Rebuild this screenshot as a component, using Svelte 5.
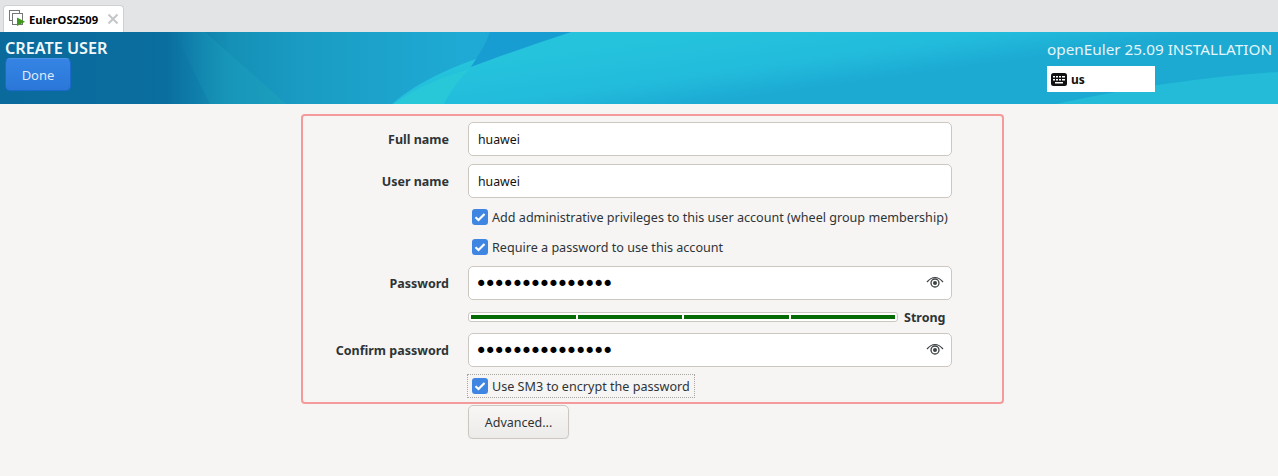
<script>
  const password = '•'.repeat(15);
  const levels = [0, 1, 2, 3];
</script>

{#snippet tick()}
  <span class="box"><svg width="16" height="16" viewBox="0 0 16 16"><path d="M3.500 8.200l3 2.800 6-6" /></svg></span>
{/snippet}

{#snippet eye()}
  <svg class="eye" width="18" height="14" viewBox="0 0 18 14">
    <path d="M1 6c2.500-3 5-4.500 8-4.500s5.500 1.500 8 4.500" fill="none" stroke="#3d4143" stroke-width="1.200" />
    <circle cx="9" cy="7" r="4" fill="none" stroke="#3d4143" stroke-width="1.300" />
    <circle cx="9" cy="7" r="2" fill="#3d4143" />
  </svg>
{/snippet}

<div class="tabbar">
  <div class="tab">
    <svg class="vm" width="18" height="18" viewBox="0 0 18 18">
      <rect x="0.500" y="0.500" width="10" height="10" fill="none" stroke="#777" />
      <rect x="3.500" y="3.500" width="10" height="11" fill="#fff" stroke="#777" />
      <path d="M8 7.500v8.500l8-4.200z" fill="#3f9a1c" />
    </svg>
    <span class="tab-name">EulerOS2509</span>
    <svg class="close" width="10" height="10" viewBox="0 0 10 10">
      <path d="M0.500 0.500l9 9M9.500 0.500l-9 9" stroke="#c4c6c8" stroke-width="2" />
    </svg>
  </div>
</div>

<header class="banner">
  <svg class="shapes" width="1278" height="72" viewBox="0 0 1278 72">
    <defs>
      <linearGradient id="base" x1="0" y1="0" x2="1" y2="0">
        <stop offset="0" stop-color="#0a6a9c" />
        <stop offset="0.13" stop-color="#0a6e9f" />
        <stop offset="0.18" stop-color="#1590b6" />
        <stop offset="0.24" stop-color="#1a9cc4" />
        <stop offset="0.36" stop-color="#1eaad4" />
        <stop offset="1" stop-color="#1eaad4" />
      </linearGradient>
      <linearGradient id="fade" gradientUnits="userSpaceOnUse" x1="700" y1="0" x2="710" y2="72">
        <stop offset="0" stop-color="#25c3dc" />
        <stop offset="0.6" stop-color="#22bbdc" />
        <stop offset="1" stop-color="#1ca9d2" />
      </linearGradient>
      <linearGradient id="wedge" gradientUnits="userSpaceOnUse" x1="175" y1="0" x2="285" y2="0">
        <stop offset="0" stop-color="#1a9cbc" stop-opacity="0" />
        <stop offset="0.7" stop-color="#1a9cbc" stop-opacity="0.7" />
        <stop offset="1" stop-color="#1b9fbe" />
      </linearGradient>
    </defs>
    <rect width="1278" height="72" fill="url(#base)" />
    <path d="M571 0H1278V72H392C430 38 500 16 571 0Z" fill="url(#fade)" />
    <path d="M490 0H571C535 12 500 24 471 35C478 24 486 12 490 0Z" fill="#189dd2" />
    <path d="M469 37C459 48 450 60 444 72H394C415 56 440 46 469 37Z" fill="#29c8d8" />
    <path d="M175 0H205L286 72H210C198 48 186 24 175 0Z" fill="url(#wedge)" />
    <path d="M1056 72C1130 56 1210 44 1278 40V72Z" fill="#23bbd8" />
  </svg>
  <div class="left">
    <h1>CREATE USER</h1>
    <button class="done">Done</button>
  </div>
  <div class="right">
    <div class="product">openEuler 25.09 INSTALLATION</div>
    <div class="layout">
      <svg width="16" height="13" viewBox="0 0 16 13">
        <rect width="16" height="13" rx="2.500" fill="#111" />
        <path d="M2 3h2v1.500H2zM5 3h2v1.500H5zM8 3h2v1.500H8zM11 3h3v1.500h-3zM2 6h2v1.500H2zM5 6h2v1.500H5zM8 6h2v1.500H8zM11 6h3v1.500h-3zM4 9h8v1.500H4z" fill="#fff" />
      </svg>
      <span>us</span>
    </div>
  </div>
</header>

<main>
  <form class="spoke">
    <div class="row">
      <label class="caption" for="fullname">Full name</label>
      <input id="fullname" class="entry" value="huawei" />
    </div>
    <div class="row user">
      <label class="caption" for="username">User name</label>
      <input id="username" class="entry" value="huawei" />
    </div>
    <div class="row first">
      <div class="check">{@render tick()}Add administrative privileges to this user account (wheel group membership)</div>
    </div>
    <div class="row second">
      <div class="check">{@render tick()}Require a password to use this account</div>
    </div>
    <div class="row pw">
      <span class="caption">Password</span>
      <div class="entry secret"><span class="dots">{password}</span>{@render eye()}</div>
    </div>
    <div class="row meter-row">
      <div class="strength">
        <div class="meter">
          {#each levels as level (level)}
            <span class="block"></span>
          {/each}
        </div>
        <span class="strength-text">Strong</span>
      </div>
    </div>
    <div class="row confirm">
      <span class="caption">Confirm password</span>
      <div class="entry secret"><span class="dots">{password}</span>{@render eye()}</div>
    </div>
    <div class="row sm3-row">
      <div class="check sm3">{@render tick()}Use SM3 to encrypt the password</div>
    </div>
  </form>
  <button class="advanced">Advanced...</button>
</main>

<style>
  :global(body) {
    background: #f6f5f4;
    font-family: "Noto Sans", "Open Sans", sans-serif;
    color: #2e3436;
  }

  .tabbar {
    height: 32px;
    background: #e3e4e6;
    padding: 5px 0 0 3px;
    box-sizing: border-box;
  }

  .tab {
    width: 121px;
    height: 27px;
    box-sizing: border-box;
    background: #fff;
    border: 1px solid #cfd0d2;
    border-bottom: 0;
    border-radius: 4px 4px 0 0;
    display: flex;
    align-items: center;
    padding-left: 5px;
  }

  .vm {
    margin-right: 2px;
  }

  .tab-name {
    font-family: "Noto Sans", sans-serif;
    font-size: 11.200px;
    font-weight: 700;
    color: #000;
    width: 79px;
    white-space: nowrap;
  }

  .banner {
    position: relative;
    height: 72px;
    display: flex;
    justify-content: space-between;
    color: #fff;
    overflow: hidden;
    background: #21bddc;
  }

  .shapes {
    position: absolute;
    inset: 0;
  }

  .left,
  .right {
    position: relative;
  }

  .left {
    padding-left: 5px;
  }

  h1 {
    margin: 7px 0 0;
    font-size: 16.200px;
    line-height: 19px;
    font-weight: 600;
    color: #f0f8fb;
  }

  .done {
    display: block;
    width: 66px;
    height: 33px;
    margin-top: 0;
    padding: 0;
    border: 1px solid #1b6acb;
    border-top-color: #4a90e8;
    border-radius: 5px;
    background: linear-gradient(#3584e4, #2a77d8);
    color: #dfeafa;
    font: 13px "Noto Sans", sans-serif;
  }

  .right {
    width: 231px;
  }

  .product {
    margin-top: 7px;
    font-size: 15.300px;
    line-height: 20px;
    color: #e4f6fa;
    white-space: nowrap;
  }

  .layout {
    width: 108px;
    height: 26px;
    margin-top: 7px;
    background: #fff;
    color: #111;
    display: flex;
    align-items: center;
    gap: 4px;
    padding-left: 4px;
    box-sizing: border-box;
    font-size: 12px;
    font-weight: 700;
  }

  main {
    padding-left: 301px;
  }

  .spoke {
    width: 703px;
    height: 290px;
    margin-top: 10px;
    box-sizing: border-box;
    border: 2px solid #f59a9a;
    border-radius: 4px;
    padding-top: 6px;
  }

  .row {
    display: grid;
    grid-template-columns: 146px 484px;
    column-gap: 19px;
    align-items: center;
  }

  .user {
    margin-top: 8px;
  }

  .first {
    margin-top: 11px;
  }

  .second {
    margin-top: 14px;
  }

  .pw {
    margin-top: 11px;
  }

  .meter-row {
    margin-top: 12px;
  }

  .confirm {
    margin-top: 11px;
  }

  .sm3-row {
    margin-top: 7px;
  }

  .caption {
    justify-self: end;
    font-size: 12.500px;
    font-weight: 700;
    color: #2e3436;
  }

  .entry {
    grid-column: 2;
    box-sizing: border-box;
    width: 484px;
    height: 34px;
    border: 1px solid #cdc7c2;
    border-radius: 5px;
    background: #fff;
    padding: 0 9px;
    font: 12.300px "Noto Sans", sans-serif;
    color: #111;
    outline: none;
  }

  .secret {
    display: flex;
    align-items: center;
    justify-content: space-between;
  }

  .dots {
    font-family: "DejaVu Sans", sans-serif;
    font-size: 21px;
    line-height: 20px;
    letter-spacing: -3.350px;
    color: #000;
    margin: 2px 0 0 -3px;
  }

  .eye {
    margin-right: -2px;
  }

  .check {
    grid-column: 2;
    height: 16px;
    display: flex;
    align-items: center;
    gap: 4px;
    padding-left: 4px;
    color: #2e3436;
    font-size: 12.600px;
    white-space: nowrap;
  }

  .box {
    width: 16px;
    height: 16px;
    border-radius: 3px;
    background: #3f86e3;
    flex: none;
    display: block;
  }

  .box svg {
    display: block;
  }

  .box path {
    fill: none;
    stroke: #fff;
    stroke-width: 2.200;
  }

  .strength {
    grid-column: 2;
    height: 10px;
    display: flex;
    align-items: center;
    gap: 6px;
  }

  .meter {
    width: 430px;
    height: 10px;
    flex: none;
    box-sizing: border-box;
    border: 1px solid #cdc7c2;
    border-radius: 3px;
    background: #fff;
    display: flex;
    gap: 2px;
    padding: 2px;
  }

  .block {
    flex: 1;
    background: #056b05;
  }

  .strength-text {
    font-size: 12.500px;
    font-weight: 700;
  }

  .sm3 {
    width: 228px;
    height: 24px;
    box-sizing: border-box;
    border: 1px dotted #aaa7a3;
    padding-left: 4px;
    margin-left: -1px;
  }

  .advanced {
    display: block;
    width: 101px;
    height: 34px;
    margin: 1px 0 0 167px;
    padding: 0;
    box-sizing: border-box;
    border: 1px solid #cdc7c2;
    border-radius: 5px;
    background: linear-gradient(#f8f7f6, #edebe9);
    box-shadow: 0 1px 1px rgba(0, 0, 0, 0.1);
    color: #2e3436;
    font: 12.500px "Noto Sans", sans-serif;
  }
</style>
